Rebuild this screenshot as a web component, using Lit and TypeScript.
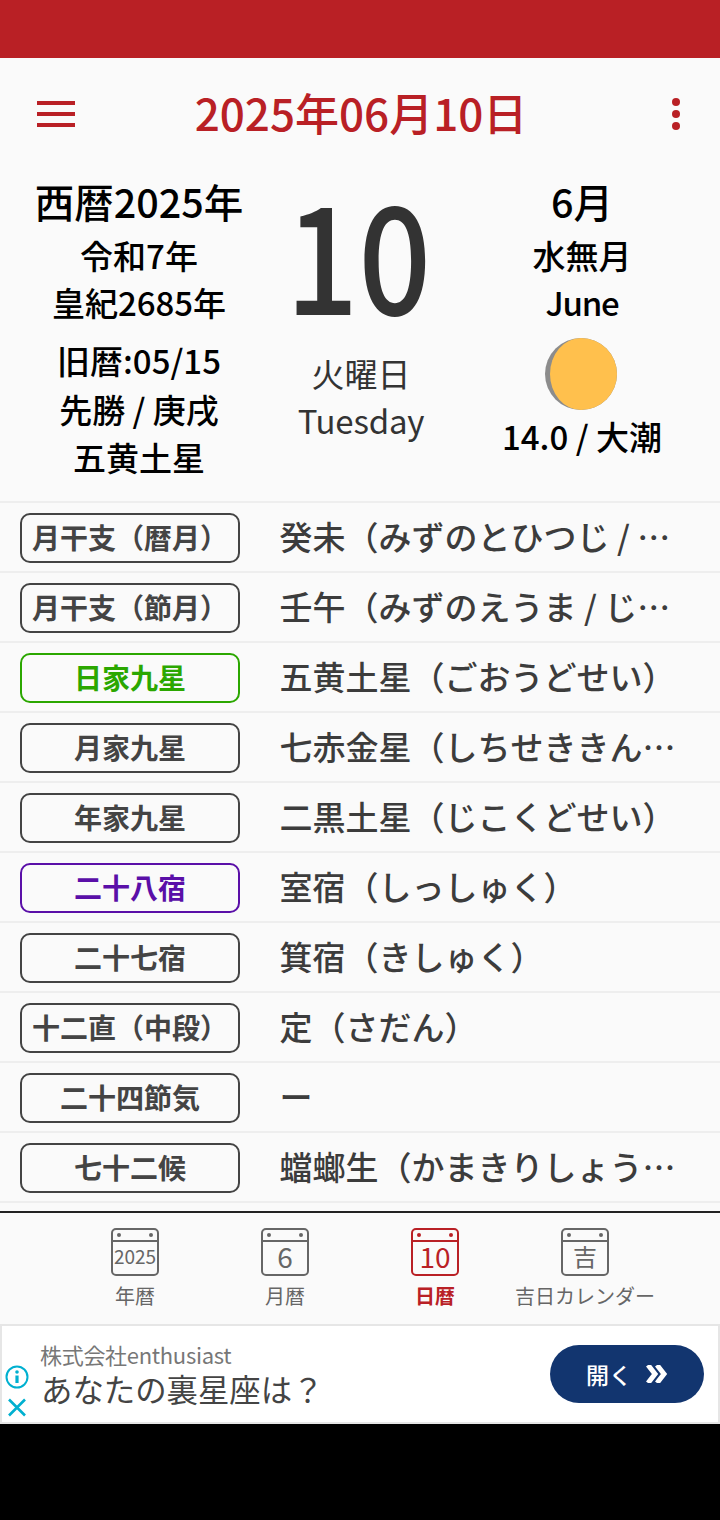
import { LitElement, html, css, svg } from "lit";
import { customElement } from "lit/decorators.js";

const rows = [
  { label: "月干支（暦月）", value: "癸未（みずのとひつじ / きび）", tone: "" },
  { label: "月干支（節月）", value: "壬午（みずのえうま / じんご）", tone: "" },
  { label: "日家九星", value: "五黄土星（ごおうどせい）", tone: "green" },
  { label: "月家九星", value: "七赤金星（しちせききんせい）", tone: "" },
  { label: "年家九星", value: "二黒土星（じこくどせい）", tone: "" },
  { label: "二十八宿", value: "室宿（しっしゅく）", tone: "purple" },
  { label: "二十七宿", value: "箕宿（きしゅく）", tone: "" },
  { label: "十二直（中段）", value: "定（さだん）", tone: "" },
  { label: "二十四節気", value: "ー", tone: "" },
  { label: "七十二候", value: "蟷螂生（かまきりしょうず）", tone: "" },
];

const tabs = [
  { icon: "2025", size: 19, label: "年暦", active: false },
  { icon: "6", size: 28, label: "月暦", active: false },
  { icon: "10", size: 28, label: "日暦", active: true },
  { icon: "吉", size: 24, label: "吉日カレンダー", active: false },
];

const calendar = (text: string, size: number) => svg`
  <svg class="cal" width="48" height="48" viewBox="0 0 48 48">
    <rect x="1" y="1" width="46" height="46" rx="4" fill="none" stroke="currentColor" stroke-width="2"/>
    <path d="M1 13H47" stroke="currentColor" stroke-width="2"/>
    <circle cx="8" cy="7" r="2" fill="currentColor"/>
    <circle cx="40" cy="7" r="2" fill="currentColor"/>
    <text x="24" y="${29.5 + size * 0.36}" text-anchor="middle" font-size="${size}" font-weight="400" fill="currentColor">${text}</text>
  </svg>`;

@customElement("app-root")
export class AppRoot extends LitElement {
  static styles = css`
    :host {
      display: block;
      width: 720px;
      height: 1520px;
      background: #000;
      font-family: "Noto Sans CJK JP", "Noto Sans", sans-serif;
      overflow: hidden;
    }
    .status { height: 58px; background: #b92025; }
    .page { background: #fafafa; height: 1266px; display: flex; flex-direction: column; }
    .page > * { flex: none; }
    .head { height: 112px; display: grid; grid-template-columns: 1fr auto 1fr; align-items: center; padding: 0 40px 0 37px; }
    .title { font-size: 44px; font-weight: 500; line-height: 108px; height: 112px; color: #b92025; margin-left: 5px; }
    .head svg { display: block; }
    .dots { justify-self: end; margin-top: 2px; }
    .info { height: 331px; display: grid; grid-template-columns: 278px 166px 276px; color: #000; text-align: center; font-weight: 500; box-sizing: border-box; }
    .col { display: flex; flex-direction: column; align-items: center; }
    .big { font-size: 39.5px; line-height: 48px; height: 48px; margin-bottom: 7px; margin-top: 7px; }
    .ln { font-size: 33px; line-height: 47px; height: 47px; }
    .june { letter-spacing: -1.2px; }
    .sp { margin-top: 10px; }
    .ln2 { font-size: 33px; line-height: 48.5px; height: 48.5px; }
    .day { font-size: 150px; line-height: 160px; height: 160px; color: #333; transform: translateX(-3px) scaleX(0.85); }
    .week { font-weight: 400; color: #333; font-size: 33px; line-height: 47px; height: 47px; letter-spacing: -0.2px; }
    .week.first { margin-top: 20px; letter-spacing: 0; }
    .moon { display: block; margin-top: 12px; margin-bottom: 3px; transform: translateX(-1px); }
    .list { border-bottom: 2px solid #eee; }
    .row { height: 66px; border-top: 2px solid #eee; display: flex; align-items: center; padding: 2px 0 0 20px; }
    .badge { width: 220px; height: 50px; box-sizing: border-box; border: 2px solid #444; border-radius: 10px; color: #444; font-size: 28px; font-weight: 700; line-height: 44px; text-align: center; flex: none; }
    .badge.green { border-color: #2ba700; color: #2ba700; }
    .badge.purple { border-color: #5a0fa8; color: #5a0fa8; }
    .value { margin-left: 39.5px; width: 400px; font-size: 33px; font-weight: 500; color: #3c3c3c; white-space: nowrap; overflow: hidden; text-overflow: ellipsis; line-height: 44px; height: 48px; }
    .tabs { margin-top: 8px; border-top: 2px solid #222; height: 111px; display: grid; grid-template-columns: 150px 150px 150px 150px; padding-left: 60px; box-sizing: border-box; }
    .tab { display: flex; flex-direction: column; align-items: center; color: #666; padding-top: 15px; font-size: 20px; line-height: 30px; white-space: nowrap; }
    .tab.active { color: #b92025; font-weight: 700; }
    .tab .cal { display: block; margin-bottom: 5px; }
    .ad { height: 100px; background: #fff; border: 2px solid #e6e6e6; box-sizing: border-box; display: flex; align-items: center; }
    .marks { width: 30px; flex: none; display: flex; flex-direction: column; align-items: center; align-self: flex-start; gap: 9px; padding: 39px 0 0 0; margin: 0 8px 0 0; }
    .marks svg { display: block; }
    .adtext { flex: 1; }
    .sponsor { font-size: 22px; line-height: 28px; color: #777; letter-spacing: -0.3px; }
    .headline { font-size: 31.4px; line-height: 40px; color: #444; margin: 1px 0 0 1px; }
    .open { width: 154px; height: 58px; border-radius: 29px; background: #12356f; color: #fff; display: flex; align-items: center; justify-content: center; gap: 14px; font-size: 23px; font-weight: 500; margin-right: 14px; flex: none; }
    .open svg { display: block; }
  `;

  render() {
    return html`
      <div class="status"></div>
      <div class="page">
        <div class="head">
          <svg width="38" height="28" viewBox="0 0 38 28"><path d="M0 3H38M0 14H38M0 25H38" stroke="#b92025" stroke-width="4"/></svg>
          <div class="title">2025年06月10日</div>
          <svg class="dots" width="8" height="34" viewBox="0 0 8 34"><circle cx="4" cy="4" r="4" fill="#b92025"/><circle cx="4" cy="16" r="4" fill="#b92025"/><circle cx="4" cy="28" r="4" fill="#b92025"/></svg>
        </div>
        <div class="info">
          <div class="col">
            <div class="big">西暦2025年</div>
            <div class="ln">令和7年</div>
            <div class="ln">皇紀2685年</div>
            <div class="ln2 sp">旧暦:05/15</div>
            <div class="ln2">先勝 / 庚戌</div>
            <div class="ln2">五黄土星</div>
          </div>
          <div class="col">
            <div class="day">10</div>
            <div class="week first">火曜日</div>
            <div class="week">Tuesday</div>
          </div>
          <div class="col">
            <div class="big">6月</div>
            <div class="ln">水無月</div>
            <div class="ln june">June</div>
            <svg class="moon" width="72" height="72" viewBox="0 0 72 72">
              <circle cx="36" cy="36" r="36" fill="#8c8c8c"/>
              <path d="M36 0A36 36 0 0 1 36 72A31 36 0 0 1 36 0Z" fill="#ffc04d"/>
            </svg>
            <div class="ln">14.0 / 大潮</div>
          </div>
        </div>
        <div class="list">
          ${rows.map(
            (r) => html`<div class="row">
              <div class="badge ${r.tone}">${r.label}</div>
              <div class="value">${r.value}</div>
            </div>`
          )}
        </div>
        <div class="tabs">
          ${tabs.map(
            (t) => html`<div class="tab ${t.active ? "active" : ""}">
              ${calendar(t.icon, t.size)}
              <span>${t.label}</span>
            </div>`
          )}
        </div>
      </div>
      <div class="ad">
        <div class="marks">
          <svg width="24" height="24" viewBox="0 0 24 24">
            <circle cx="12" cy="12" r="10.5" fill="none" stroke="#00b0d0" stroke-width="2"/>
            <circle cx="12" cy="7" r="1.8" fill="#00b0d0"/>
            <path d="M12 10.5V18" stroke="#00b0d0" stroke-width="3.2"/>
          </svg>
          <svg width="20" height="19" viewBox="0 0 20 19"><path d="M2 1.5L18 17.5M18 1.5L2 17.5" stroke="#00b0d0" stroke-width="2.6"/></svg>
        </div>
        <div class="adtext">
          <div class="sponsor">株式会社enthusiast</div>
          <div class="headline">あなたの裏星座は？</div>
        </div>
        <div class="open">
          <span>開く</span>
          <svg width="22" height="18" viewBox="0 0 22 18"><path d="M2 0L9 9L2 18M11 0L18 9L11 18" fill="none" stroke="#fff" stroke-width="5"/></svg>
        </div>
      </div>
    `;
  }
}
